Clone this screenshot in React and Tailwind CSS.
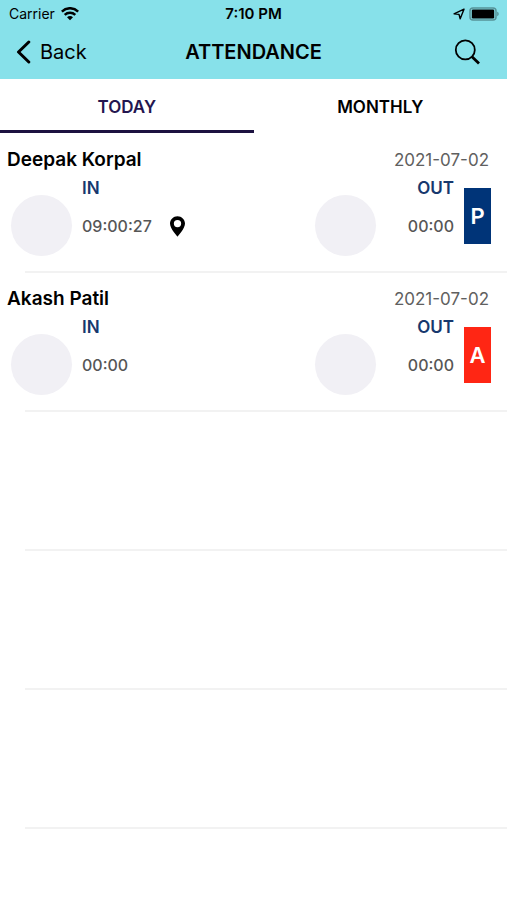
import React, { useState } from 'react';

const records = [
    { id: 1, name: 'Deepak Korpal', date: '2021-07-02', timeIn: '09:00:27', timeOut: '00:00', status: 'P', located: true },
    { id: 2, name: 'Akash Patil', date: '2021-07-02', timeIn: '00:00', timeOut: '00:00', status: 'A', located: false },
];

const statusColors = {
    P: 'bg-[#003478]',
    A: 'bg-[#ff2614]',
};

const tabs = ['TODAY', 'MONTHLY'];

const StatusBar = () => (
    <div className="grid grid-cols-[1fr_auto_1fr] items-center h-7 px-2 text-[15px]">
        <div className="flex items-center gap-1.5 pl-px">
            <span className="text-sm">Carrier</span>
            <svg width="18" height="14" viewBox="0 0 18 14" fill="none" stroke="#000" strokeWidth="2.5" aria-hidden="true">
                <path d="M.8 4.6C5.4 .1 12.6 .1 17.2 4.6" />
                <path d="M3.7 7.9C6.7 5.1 11.3 5.1 14.3 7.9" />
                <path d="M6 10.2C7.7 8.7 10.3 8.7 12 10.2L9 13.2Z" fill="#000" stroke="none" />
            </svg>
        </div>
        <div className="text-center font-semibold">7:10 PM</div>
        <div className="flex items-center justify-end gap-1">
            <svg width="12" height="12" viewBox="0 0 12 12" fill="none" stroke="#000" strokeWidth="1.4" strokeLinejoin="round" aria-hidden="true">
                <path d="M11 1.2L1 5.8L6 6.4L7.2 10.8Z" />
            </svg>
            <svg width="30" height="14" viewBox="0 0 30 14" aria-hidden="true">
                <rect x="1" y="1" width="26" height="12" rx="3" fill="none" stroke="#579298" strokeWidth="1.5" />
                <rect x="2.8" y="2.6" width="22.4" height="8.8" rx="1.2" fill="#000" />
                <path d="M28.2 4.8C30.2 5.4 30.2 8.6 28.2 9.2Z" fill="#579298" />
            </svg>
        </div>
    </div>
);

const NavBar = () => (
    <div className="grid grid-cols-[1fr_auto_1fr] items-center h-[51px] pb-1 px-4">
        <button type="button" className="flex items-center gap-2 text-xl justify-self-start">
            <svg width="16" height="24" viewBox="0 0 16 24" fill="none" stroke="#000" strokeWidth="3" strokeLinecap="round" strokeLinejoin="round" aria-hidden="true">
                <path d="M12.8 2L2.5 12L12.8 22" />
            </svg>
            Back
        </button>
        <h1 className="text-xl font-semibold">ATTENDANCE</h1>
        <button type="button" aria-label="Search" className="justify-self-end mr-2.5">
            <svg width="28" height="28" viewBox="0 0 28 28" fill="none" stroke="#000" aria-hidden="true">
                <circle cx="12.3" cy="11.9" r="9.5" strokeWidth="1.8" />
                <path d="M19 18.8L26 25.5" strokeWidth="2.8" />
            </svg>
        </button>
    </div>
);

const AttendanceRow = ({ record }) => (
    <li>
        <div className="h-[137px] pt-3.5">
            <div className="flex items-center justify-between h-6 pl-[7px] pr-[18px]">
                <h2 className="text-[19px] leading-6 font-semibold">{record.name}</h2>
                <span className="text-[17px] leading-6 text-[#606060]">{record.date}</span>
            </div>
            <div className="flex items-start pl-[11px] pr-4">
                <div className="size-[61px] mt-[23px] rounded-full bg-[#f1f0f5]" />
                <div className="flex flex-col gap-[18px] pt-1.5 ml-2.5">
                    <span className="text-[17px] leading-5 font-semibold text-[#17386e]">IN</span>
                    <div className="flex items-center gap-[18px] h-5">
                        <span className="text-base font-medium text-[#565656]">{record.timeIn}</span>
                        {record.located && (
                            <svg width="15" height="21" viewBox="0 0 16 22" role="img" aria-label="Location">
                                <path fillRule="evenodd" d="M8 0C3.6 0 0 3.5 0 7.9C0 13.3 8 22 8 22S16 13.3 16 7.9C16 3.5 12.4 0 8 0ZM8 4A3.9 3.9 0 1 1 8 11.8A3.9 3.9 0 1 1 8 4Z" />
                            </svg>
                        )}
                    </div>
                </div>
                <div className="size-[61px] mt-[23px] ml-auto rounded-full bg-[#f1f0f5]" />
                <div className="flex flex-col items-end gap-[18px] w-[78px] pt-1.5">
                    <span className="text-[17px] leading-5 font-semibold text-[#17386e]">OUT</span>
                    <span className="text-base leading-5 font-medium text-[#565656]">{record.timeOut}</span>
                </div>
                <div className={`flex items-center justify-center w-[27px] h-14 mt-4 ml-2.5 text-[22px] font-semibold text-white ${statusColors[record.status]}`}>
                    {record.status}
                </div>
            </div>
        </div>
        <div className="h-0.5 ml-[25px] bg-[#f2f2f2]" />
    </li>
);

const App = () => {
    const [activeTab, setActiveTab] = useState('TODAY');

    return (
        <div className="min-h-screen bg-white text-black font-['Inter','Liberation_Sans',sans-serif]">
            <header className="bg-[#87e1ea]">
                <StatusBar />
                <NavBar />
            </header>
            <div role="tablist" className="grid grid-cols-2">
                {tabs.map((tab) => (
                    <button
                        key={tab}
                        type="button"
                        role="tab"
                        aria-selected={activeTab === tab}
                        onClick={() => setActiveTab(tab)}
                        className={`h-[54px] pt-1.5 border-b-3 text-[17px] font-semibold ${activeTab === tab ? 'border-[#1c1240] text-[#241650]' : 'border-transparent'}`}
                    >
                        {tab}
                    </button>
                ))}
            </div>
            <ul className="pt-px">
                {records.map((record) => (
                    <AttendanceRow key={record.id} record={record} />
                ))}
            </ul>
            {/* Empty rows keep their separators */}
            {[0, 1, 2].map((i) => (
                <div key={i} className="h-[139px] ml-[25px] border-b-2 border-[#f2f2f2]" />
            ))}
        </div>
    );
};

export default App;
